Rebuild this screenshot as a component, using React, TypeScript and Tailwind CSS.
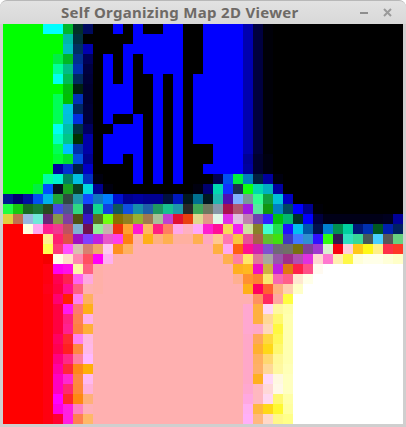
const T = "0000b0 000040 000008 k*13";
const ROWS: string[] = [
  "g*4 00ffff*2 00b82e 033028 000a60 k*2 b k b k*2 b*2 k*2 b*4 " + T,
  "g*6 00b8a8 002f3f k*5 b*5 k*2 b*4 " + T,
  "g*6 00bbc0 003060 0000b0 k*3 b*6 k*2 b*4 " + T,
  "g*5 00ee44 00b824 003090 000058 k b k b k b*4 k*2 b*4 " + T,
  "g*5 00ff99 00bb88 0030b0 000040 k b k b k b*4 k*2 b*4 " + T,
  "g*5 00ffee 00bb55 002a60 000038 k b k b k*2 b k b k b*5 " + T,
  "g*6 00bb10 002010 000030 k b*3 k*2 b k b k b*5 " + T,
  "g*5 00ff55 00c000 0030b8 000030 k b*3 k*2 b k b k b*5 " + T,
  "g*5 00ff55 00c0e0 002860 000038 k b*3 k*2 b k b k b*5 " + T,
  "g*5 00ff55 00c0d8 0030e0 000038 k b k*2 b k b k b k b*5 " + T,
  "g*5 00ffee 00c0a8 003040 000060 k*2 b*3 k b k b k b*5 " + T,
  "g*5 00ffbb 00c888 003000 0000a8 k b*4 k b k b k b*5 " + T,
  "g*5 00ff55 00c0ff 0030a8 0000a8 k b*4 k b k b k*3 b*3 " + T,
  "g*5 00ff33 00e030 0050e0 000090 k b*2 k b k b k b k*3 b*3 000098 000030 000010 k*13",
  "g*5 0000a0 0030d0 002040 0000c8 k*4 b k b k b k*2 b*4 0000a0 000030 000010 k*13",
  "g*4 00ffa0 00f0d0 008060 00c0e0 0030c0 000010 k*3 b k b k b k*3 000050 0050f0 00f040 0080c0 002040 0000a0 000010 k*12",
  "g*3 00f040 0050ff 081020 18a020 084020 00d8e0 000090 000010 k*8 000010 000070 00d8b0 1030ff 1a3050 10ff10 00d8b0 00b0c0 0000a0 k*12",
  "001890 000070 0010a0 0050f0 00b0e8 20a838 304840 2098a8 1048ff 1078c0 0080ff 0010d0 000090 0000a0 000090 000090 001040 0018c0 001820 007090 001820 20b8b0 5010b0 80b0ff 789898 30ff90 10a040 00c0d8 0000c0 k*11",
  "20ff40 18c810 186820 187838 284820 4848e0 505890 30d880 181880 10d890 1040e0 105858 1050e0 1890a8 2060a8 209860 18c090 2098a8 282828 40a858 707860 8898a8 a81050 b05870 a018e0 58e8a0 109810 0080c0 004860 0000ff 000090 000008 k*8",
  "e0d040 c07050 98b8e0 70e8d8 682878 889848 8040a0 505010 3818c8 587020 70ff10 887000 908020 98b030 a07850 a8c098 c040d0 e01030 e84010 e0d890 e09888 e0f8e8 e030e8 e0c0e0 c080b0 7040b0 3020ff 00c010 00b870 003028 0000ff 000040 000018*6 000020 000098",
  "r*2 ffffe0 ffa8f0 ff2090 f03890 c05060 80b0d0 701050 90f098 c8b0b0 f03010 ffa030 ff18d0 ffb860 ff2080 ff8060 ffa8e8 ffb0c0 ffa8f8 ff20d0 ff1098 f8d858 f020f0 d0e0a0 888028 40ffd0 20e050 2010ff 00c0f0 0058a8 001050 0080d0 009050 00d0a0 001878 0030b0 005820 0020b0 002060",
  "r*4 fff090 ff2070 e05048 a010c0 8040ff c020e0 e858c8 ff40e8 ff8010 ffb0a8 ffb018 ffb080 ffb050 ffb0a0*2 ffb050 ffa8c0 ffc890 ff78b0 f8c840 e85098 a86048 60c030 40e010 4038c0 4078ff 3090d0 3010ff 30ff10 301850 30e0c0 38d898 485858 48d0ff 585858 68d080",
  "r*4 ffff50 ff3878 ff50ff d8c0b0 d88070 f0a868 ffc8f0 ff9020 ffb060 p*8 ffb040 ffa8f0 ff6010 ff1090 d020b0 8050d0 706878 707068 787010 804098 a038d0 d8f0d0 f80010 ffd0d8 ffc818 fff818 fff088 ff3048 ff3828",
  "r*4 f40000 ffffe8 ffe0c8 ff88b0 ff5060 ff00f8 ffb0f0 p*11 ffb050 ff80a0 ffe868 e07898 a8a8a0 9858a8 a03088 b050b0 e030e0 ffd8d0 ff78d0 fff0b0 fff848 ffffd8 ffffe8*2 ffffd8 ffffc8",
  "r*4 ff0010 ff00f0 ff10e8 fff8a8 ff6080 ffb0a8 p*13 ffb020 ffb820 f010c0 d0b040 c020e0 e07810 ff2048 ff5088 fffaf0 w*8",
  "r*4 ff0010 ff0050 ff2050 ff60f0 ffa8e0 ffb0a8 p*13 ffb090 ff9030 ff8030 f8e870 f868b0 ff6088 ffe8d0 ffffe8 w*9",
  "r*4 ff0018 ff0040 ff1090 ff6080 ffb0b0 ffb0a8 p*14 ffb018 ff0060 ff6030 ffb080 ffd0b0 ffffc8 w*10",
  "r*4 ff0010 ff0070 ff2000 ff80f0 ffb060 p*15 ffb0b0 ff9060 ff2860 ffa8a0 ffff40 w*11",
  "r*4 ff0010 ff0040 ff18f0 ff7870 ffb018 p*15 ffa8d0 ffb040 ffd8f8 fff8a0 ffffa8 w*11",
  "r*4 ff0010 ff0040 ff2080 ff8050 ffb0e8 p*15 ffa8d0 ffb040 ffd898 fff870 ffffb0 w*11",
  "r*4 ff0010 ff0040 ff2090 ff8040 ffb038 p*15 ffa8d0 ffa8c8 ffd8b8 fff840 ffffb0 w*11",
  "r*4 ff0010 ff0060 ff2830 ff80f0 ffb8e0 p*15 ffa8c8 ffa858 ffd840 fff858 ffffb0 w*11",
  "r*4 ff0010 ff0050 ff2020 ff8840 ffb8e8 p*15 ffa8c8 ffb030 ffd818 fff870 ffffb0 w*11",
  "r*4 ff0010 ff0080 ff2888 ff80a0 ffb8ff p*15 ffa8c8 ffb060 ffd870 fff898 ffffb0 w*11",
  "r*4 ff0010 ff00a0 ff2838 ff8818 ffb008 p*15 ffa8c8 ffb068 ffd898 fff8a0 ffffb8 w*11",
  "r*4 ff0010 ff00c0 ff28d0 ff8840 ffb8f0 p*15 ffa8c8 ffb020 ffd8f8 fff8e0 ffffc0 w*11",
  "r*4 ff0010 ff00c0 ff2870 ff8838 ffb0d8 p*15 ffa8d0 ffb8c0 ffd8d8 fff8e8 ffffc0 w*11",
  "r*4 ff0010 ff00ff ff2828 ff8810 ffb078 p*15 ffa8e0 ffb8c0 ffd8f0 fff870 ffffa8 w*11",
  "r*4 ff0010 ff00e0 ff20e0 ff80c0 ffb0b8 p*15 ffb0f0 ffb840 ffd818 fff830 ffffa0 w*11",
  "r*4 ff0010 ff0030 ff20e0 ff8050 ffb868 p*15 ffb0f8 ffb880 ffd8c8 fff888 ffff88 w*11",
];

const ALIAS: Record<string, string> = {
  g: "00ff00",
  k: "000000",
  b: "0000ff",
  r: "ff0000",
  p: "ffb0b0",
  w: "ffffff",
};

const cells: string[] = ROWS.flatMap((row) =>
  row.split(" ").flatMap((token) => {
    const [name, count] = token.split("*");
    return Array<string>(Number(count ?? 1)).fill("#" + (ALIAS[name] ?? name));
  }),
);

export default function App() {
  return (
    <div className="w-[406px] h-[427px] bg-white overflow-hidden">
      <div className="w-full h-full flex flex-col rounded-t-[7px] overflow-hidden bg-[#cfcfcf] border-t border-[#b8b8b8]">
        <header className="h-[23px] shrink-0 flex items-center pl-[61px] pr-[14px] bg-[linear-gradient(#e2e2e2,#d8d8d8)]">
          <span className="font-['Noto_Sans',sans-serif] font-bold text-[15px] leading-none text-[#6e6a66] tracking-[0.3px]">
            Self Organizing Map 2D Viewer
          </span>
          <div className="ml-auto flex items-center gap-[15px]">
            <span className="w-[8px] h-[2px] bg-[#8e8e8e]" />
            <svg width="9" height="9" viewBox="0 0 9 9" aria-hidden="true">
              <path d="M1 1 L8 8 M8 1 L1 8" stroke="#9a9a9a" strokeWidth="2" fill="none" />
            </svg>
          </div>
        </header>
        <div className="px-[3px] pb-[3px]">
          <div className="grid grid-cols-[repeat(40,10px)] auto-rows-[10px]">
            {cells.map((color, i) => (
              <div key={i} style={{ backgroundColor: color }} />
            ))}
          </div>
        </div>
      </div>
    </div>
  );
}
